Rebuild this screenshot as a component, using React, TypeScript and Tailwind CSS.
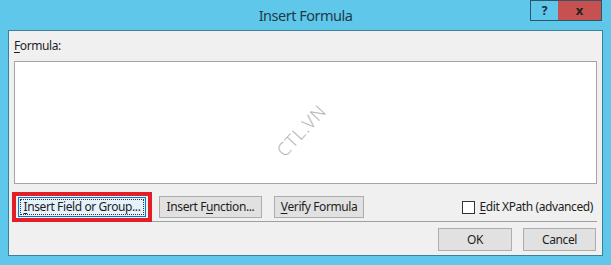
import { useState } from 'react'

const font = { fontFamily: '"Noto Sans", "Open Sans", sans-serif' }

function Btn({ label, u, rest, className }: { label: string; u: string; rest: string; className?: string }) {
  return (
    <button
      className={
        'h-[22px] border border-[#adadad] bg-[#e1e1e1] text-[12px] tracking-[-0.4px] whitespace-nowrap text-[#1e1e1e] leading-none flex items-center justify-center ' +
        (className || '')
      }
    >
      {label}
      <span className="underline underline-offset-2">{u}</span>
      {rest}
    </button>
  )
}

export default function App() {
  const [xpath, setXpath] = useState(false)

  return (
    <div className="w-[611px] h-[265px] bg-[#5fc8ea] flex flex-col overflow-hidden" style={font}>
      {/* title bar */}
      <div className="h-[30px] flex flex-row relative">
        <div className="flex-1 flex items-center justify-center text-[14.5px] tracking-[-0.5px] text-[#1f3a48] pt-[2px]">
          Insert Formula
        </div>
        <div className="absolute right-[9px] top-0 flex flex-row h-[21px]">
          <div className="w-[28px] h-[21px] border border-[#2f5668] border-r-0 flex items-center justify-center text-[12px] font-bold text-[#1b2a3a]">
            ?
          </div>
          <div className="w-[44px] h-[21px] bg-[#c75050] border border-[#2f5668] border-l-0 flex items-center justify-center text-[13px] font-bold text-[#222]">
            x
          </div>
        </div>
      </div>

      {/* client area */}
      <div className="mx-[8px] h-[226px] bg-[#f0f0f0] border border-[#3e7f99] flex flex-col px-[5px] text-[12px] tracking-[-0.4px] text-[#1e1e1e]">
        <div className="mt-[6px] h-[18px] leading-[18px]">
          <span className="underline underline-offset-2">F</span>ormula:
        </div>
        <div className="mt-[6px] h-[123px] bg-white border border-[#a5a5a5] flex items-center justify-center overflow-hidden">
          <div className="-rotate-[47deg] text-[18px] font-light text-[#b8b8b8] tracking-[1px] mt-[16px] mr-[8px]">CTL.VN</div>
        </div>

        <div className="flex flex-row items-center mt-[8px] h-[30px] relative">
          <div className="w-[140px] h-[30px] border-[4px] border-[#e21f26] flex items-center justify-center -ml-[2px]">
            <div className="w-[128px] h-[20px] border border-[#0078d7] bg-[#e5f1fb] p-[1px]">
              <div className="w-full h-full border border-dotted border-[#333] flex items-center justify-center whitespace-nowrap leading-none">
                <span className="underline underline-offset-2">I</span>nsert Field or Group...
              </div>
            </div>
          </div>
          <Btn label="Insert F" u="u" rest="nction..." className="ml-[7px] w-[103px]" />
          <Btn label="" u="V" rest="erify Formula" className="ml-[12px] w-[90px]" />
          <div className="flex-1" />
          <label className="flex flex-row items-center whitespace-nowrap mr-[4px] cursor-pointer">
            <span
              onClick={() => setXpath(!xpath)}
              className="w-[13px] h-[13px] bg-white border border-[#333] mr-[4px] flex items-center justify-center text-[10px]"
            >
              {xpath ? '✓' : ''}
            </span>
            <span className="underline underline-offset-2">E</span>dit XPath (advanced)
          </label>
        </div>
        <div className="h-px bg-[#a0a0a0] -mt-[1px]" />

        <div className="flex flex-row justify-end gap-[11px] mt-[6px] mr-[1px]">
          <Btn label="OK" u="" rest="" className="w-[74px] h-[23px]" />
          <Btn label="Cancel" u="" rest="" className="w-[73px] h-[23px]" />
        </div>
      </div>
    </div>
  )
}
